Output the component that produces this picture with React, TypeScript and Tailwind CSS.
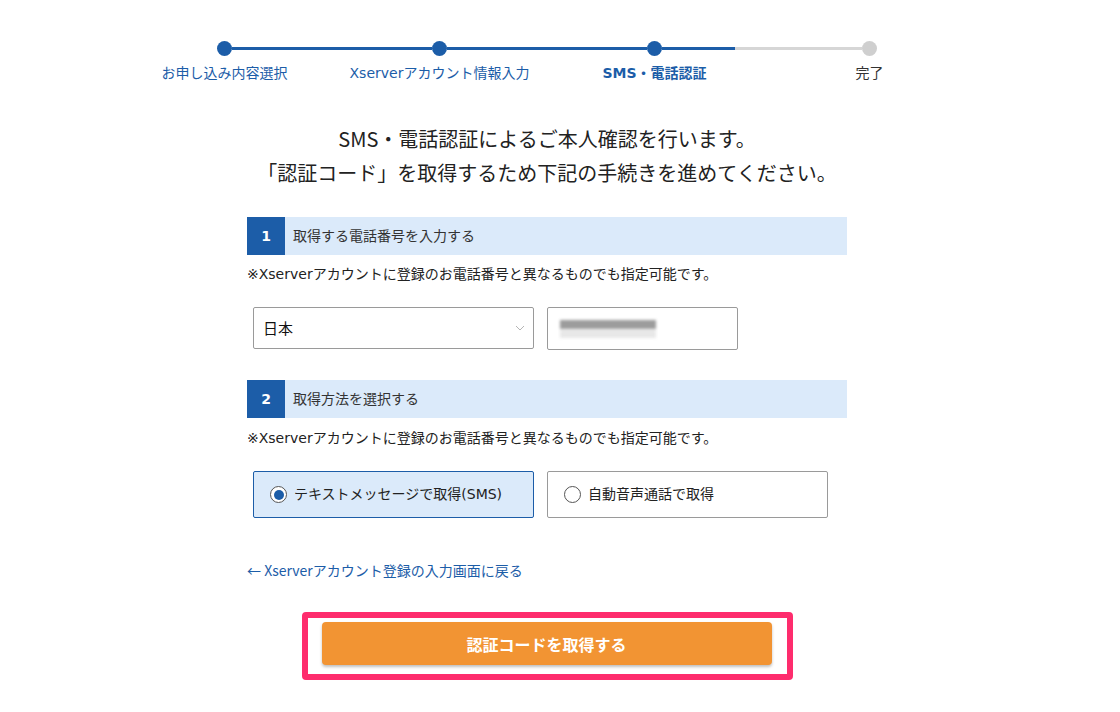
const steps = [
  { label: "お申し込み内容選択", active: true },
  { label: "Xserverアカウント情報入力", active: true },
  { label: "SMS・電話認証", active: true, current: true },
  { label: "完了", active: false },
];

function Stepper() {
  return (
    <div className="grid w-[860px] grid-cols-4">
      {steps.map((s, i) => (
        <div key={i} className="flex flex-col items-center">
          <div className="flex w-full items-center">
            <div
              className={
                i === 0
                  ? "h-[3px] flex-1"
                  : i === 3
                  ? "h-[3px] flex-1 bg-[#d6d6d6]"
                  : "h-[3px] flex-1 bg-[#1c5da8]"
              }
            />
            <div
              className={
                s.active
                  ? "h-[15px] w-[15px] rounded-full bg-[#1c5da8]"
                  : "h-[15px] w-[15px] rounded-full bg-[#cfcfcf]"
              }
            />
            {i === 2 ? (
              <div className="flex h-[3px] flex-1">
                <div className="h-full w-[73px] bg-[#1c5da8]" />
                <div className="h-full flex-1 bg-[#d6d6d6]" />
              </div>
            ) : (
              <div
                className={
                  i === 3
                    ? "h-[3px] flex-1"
                    : "h-[3px] flex-1 bg-[#1c5da8]"
                }
              />
            )}
          </div>
          <div
            className={
              s.current
                ? "mt-[7px] text-[14px] font-bold leading-[20px] text-[#1c5da8]"
                : s.active
                ? "mt-[7px] text-[14px] leading-[20px] text-[#1c5da8]"
                : "mt-[7px] text-[14px] leading-[20px] text-[#333]"
            }
          >
            {s.label}
          </div>
        </div>
      ))}
    </div>
  );
}

function SectionHeader({ num, title }: { num: string; title: string }) {
  return (
    <div className="flex h-[38px] w-[600px] items-center bg-[#dbeafa]">
      <div className="flex h-full w-[38px] items-center justify-center bg-[#1c5da8] text-[14px] font-bold text-white">
        {num}
      </div>
      <div className="ml-[8px] text-[14px] text-[#333]">{title}</div>
    </div>
  );
}

function Note({ className }: { className: string }) {
  return (
    <p className={className + " text-[14px] leading-[20px] text-[#222]"}>
      ※Xserverアカウントに登録のお電話番号と異なるものでも指定可能です。
    </p>
  );
}

export default function App() {
  return (
    <div
      className="min-h-[712px] w-[1120px] bg-white"
      style={{ fontFamily: '"DejaVu Sans", "Noto Sans CJK JP", sans-serif' }}
    >
      <div className="flex w-[1094px] flex-col items-center pt-[41px]">
        <Stepper />

        <h1
          className="mt-[39px] text-center text-[20px] font-normal leading-[34px] text-[#222]"
          style={{ fontFamily: '"Noto Sans CJK JP", sans-serif' }}
        >
          SMS・電話認証によるご本人確認を行います。
          <br />
          「認証コード」を取得するため下記の手続きを進めてください。
        </h1>

        <div className="mt-[27px] w-[600px]">
          <SectionHeader num="1" title="取得する電話番号を入力する" />
          <Note className="mt-[9px]" />

          <div className="mt-[23px] flex gap-[13px] pl-[6px]">
            <div className="flex h-[42px] w-[281px] items-center justify-between rounded-[2px] border border-[#9a9a9a] pl-[9px] pr-[8px]">
              <span className="text-[15px] text-[#111]" style={{ fontFamily: '"Noto Sans CJK JP", sans-serif' }}>
                日本
              </span>
              <svg width="10" height="6" viewBox="0 0 10 6" fill="none">
                <path d="M1 1l4 4 4-4" stroke="#b5b5b5" strokeWidth="1" />
              </svg>
            </div>
            <div className="flex h-[43px] w-[191px] items-center rounded-[2px] border border-[#9a9a9a] pl-[12px]">
              <div className="flex flex-col gap-[1px] blur-[1.5px]">
                <div className="h-[9px] w-[96px] bg-[#9c9c9c]" />
                <div className="h-[8px] w-[96px] bg-[#e8e8e8]" />
              </div>
            </div>
          </div>

          <div className="mt-[30px]">
            <SectionHeader num="2" title="取得方法を選択する" />
          </div>
          <Note className="mt-[10px]" />

          <div className="mt-[23px] flex gap-[13px] pl-[6px]">
            <label className="flex h-[47px] w-[281px] items-center rounded-[2px] border border-[#1c5da8] bg-[#dbeafa] pl-[16px]">
              <span className="flex h-[17px] w-[17px] items-center justify-center rounded-full border border-[#555] bg-white">
                <span className="h-[10px] w-[10px] rounded-full bg-[#1c5da8]" />
              </span>
              <span className="ml-[7px] text-[14px] text-[#222]">テキストメッセージで取得(SMS)</span>
            </label>
            <label className="flex h-[47px] w-[281px] items-center rounded-[2px] border border-[#9a9a9a] bg-white pl-[16px]">
              <span className="h-[17px] w-[17px] rounded-full border border-[#555] bg-white" />
              <span className="ml-[7px] text-[14px] text-[#222]">自動音声通話で取得</span>
            </label>
          </div>

          <a
            href="#"
            className="mt-[42px] block text-[14px] leading-[20px] text-[#1c5da8]"
            style={{ fontFamily: '"Noto Sans CJK JP", sans-serif' }}
          >
            ← Xserverアカウント登録の入力画面に戻る
          </a>
        </div>

        <div className="mt-[32px] w-[491px] rounded-[4px] border-[6px] border-[#fe2c6d] pb-[9px] pl-[14px] pr-[15px] pt-[4px]">
          <button
            type="button"
            className="flex h-[43px] w-full items-center justify-center rounded-[4px] bg-[#f29433] text-[16px] font-bold text-white shadow-[0_2px_3px_rgba(0,0,0,0.25)]"
            style={{ fontFamily: '"Noto Sans CJK JP", sans-serif' }}
          >
            認証コードを取得する
          </button>
        </div>
      </div>
    </div>
  );
}
